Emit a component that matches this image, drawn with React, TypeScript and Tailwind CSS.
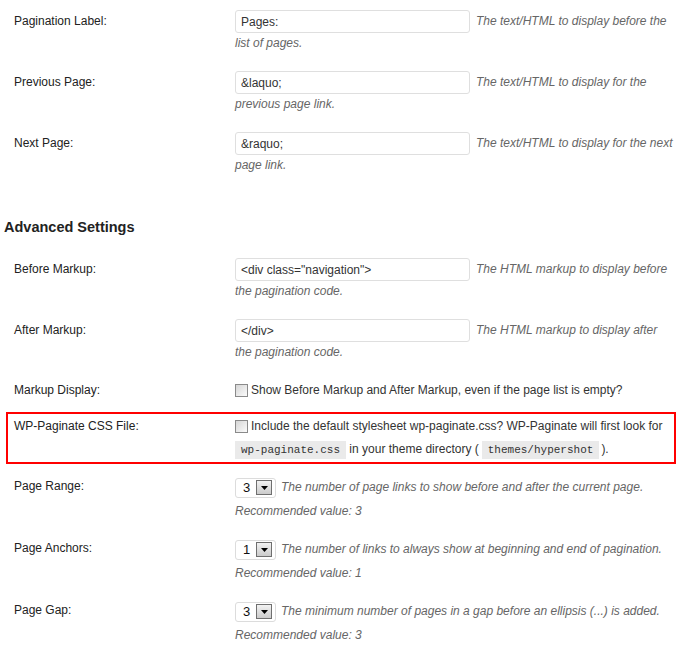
import React from "react";

const sans = "font-['Liberation_Sans',Arial,Helvetica,sans-serif]";

function Checkbox() {
  return (
    <span className="inline-block align-middle w-[13px] h-[13px] border border-[#8a8a8a] bg-gradient-to-br from-[#d6d6d6] to-[#fbfbfb] mr-[3px] box-border" />
  );
}

function Select({ value }: { value: string }) {
  return (
    <span className="inline-flex align-middle items-center h-[20px] w-[41px] border border-[#dcdcdc] rounded-[3px] bg-white mr-[5px] box-border not-italic">
      <span className="w-[20px] pl-[7px] text-[13px] text-[#111] leading-[18px] not-italic">{value}</span>
      <span className="flex items-center justify-center w-[16px] h-[15px] border border-[#6f6f6f] bg-gradient-to-b from-[#f2f2f2] to-[#cbcbcb] box-border">
        <svg width="7" height="4" viewBox="0 0 7 4">
          <path d="M0 0 H7 L3.5 4 Z" fill="#000" />
        </svg>
      </span>
    </span>
  );
}

function InputRow({ label, value, desc }: { label: string; value: string; desc: string }) {
  return (
    <div className="flex items-start">
      <div className="w-[235px] shrink-0 pl-[14px] pt-[11px] leading-[20px] text-[12px] text-[#222]">{label}</div>
      <div className="flex-1 pt-[10px] pb-[8px] leading-[20px] text-[12px]">
        <input
          type="text"
          readOnly
          defaultValue={value}
          className={`${sans} inline-block align-middle w-[235px] h-[23px] border border-[#dfdfdf] rounded-[3px] px-[5px] text-[12px] text-[#333] bg-white mr-[6px] box-border outline-none`}
        />
        <span className="italic text-[#666]">{desc}</span>
      </div>
    </div>
  );
}

function SelectRow({ label, value, desc, rec }: { label: string; value: string; desc: string; rec: string }) {
  return (
    <div className="flex items-start">
      <div className="w-[235px] shrink-0 pl-[14px] pt-[12px] leading-[20px] text-[12px] text-[#222]">{label}</div>
      <div className="flex-1 pt-[11px] pb-[3px] leading-[24px] text-[12px] text-[#666]">
        <Select value={value} />
        <span className="italic">{desc}</span>
        <br />
        <span className="italic">Recommended value: {rec}</span>
      </div>
    </div>
  );
}

export default function App() {
  return (
    <div className={`${sans} w-[676px] bg-white text-[12px] text-[#222]`}>
      <InputRow label="Pagination Label:" value={"Pages:"} desc="The text/HTML to display before the list of pages." />
      <InputRow label="Previous Page:" value={"&laquo;"} desc="The text/HTML to display for the previous page link." />
      <InputRow label="Next Page:" value={"&raquo;"} desc="The text/HTML to display for the next page link." />

      <h3 className="pl-[4px] mt-[34px] mb-[11px] leading-[20px] text-[14.5px] font-bold text-[#222]">Advanced Settings</h3>

      <InputRow label="Before Markup:" value={'<div class="navigation">'} desc="The HTML markup to display before the pagination code." />
      <InputRow label="After Markup:" value={"</div>"} desc="The HTML markup to display after the pagination code." />

      <div className="flex items-start">
        <div className="w-[235px] shrink-0 pl-[14px] pt-[10px] leading-[20px] text-[12px] text-[#222]">Markup Display:</div>
        <div className="flex-1 pt-[10px] pb-[12px] leading-[20px] text-[12px] text-[#333]">
          <Checkbox />
          <span>Show Before Markup and After Markup, even if the page list is empty?</span>
        </div>
      </div>

      <div className="ml-[6px] w-[670px] border-2 border-[#ff0000] flex items-start box-border">
        <div className="w-[227px] shrink-0 pl-[6px] pt-[1px] leading-[23px] text-[12px] text-[#222]">WP-Paginate CSS File:</div>
        <div className="flex-1 pt-[1px] leading-[23px] text-[12px] text-[#333]">
          <Checkbox />
          <span>Include the default stylesheet wp-paginate.css? WP-Paginate will first look for </span>
          <code className="font-['Liberation_Mono','Courier_New',monospace] text-[11px] bg-[#eaeaea] px-[6px] py-[3px] text-[#333]">wp-paginate.css</code>
          <span> in your theme directory (</span>
          <code className="ml-[3px] font-['Liberation_Mono','Courier_New',monospace] text-[11px] bg-[#eaeaea] px-[6px] py-[3px] text-[#333]">themes/hypershot</code>
          <span className="ml-[2px]">).</span>
        </div>
      </div>

      <SelectRow label="Page Range:" value="3" desc="The number of page links to show before and after the current page." rec="3" />
      <SelectRow label="Page Anchors:" value="1" desc="The number of links to always show at beginning and end of pagination." rec="1" />
      <SelectRow label="Page Gap:" value="3" desc="The minimum number of pages in a gap before an ellipsis (...) is added." rec="3" />
    </div>
  );
}
